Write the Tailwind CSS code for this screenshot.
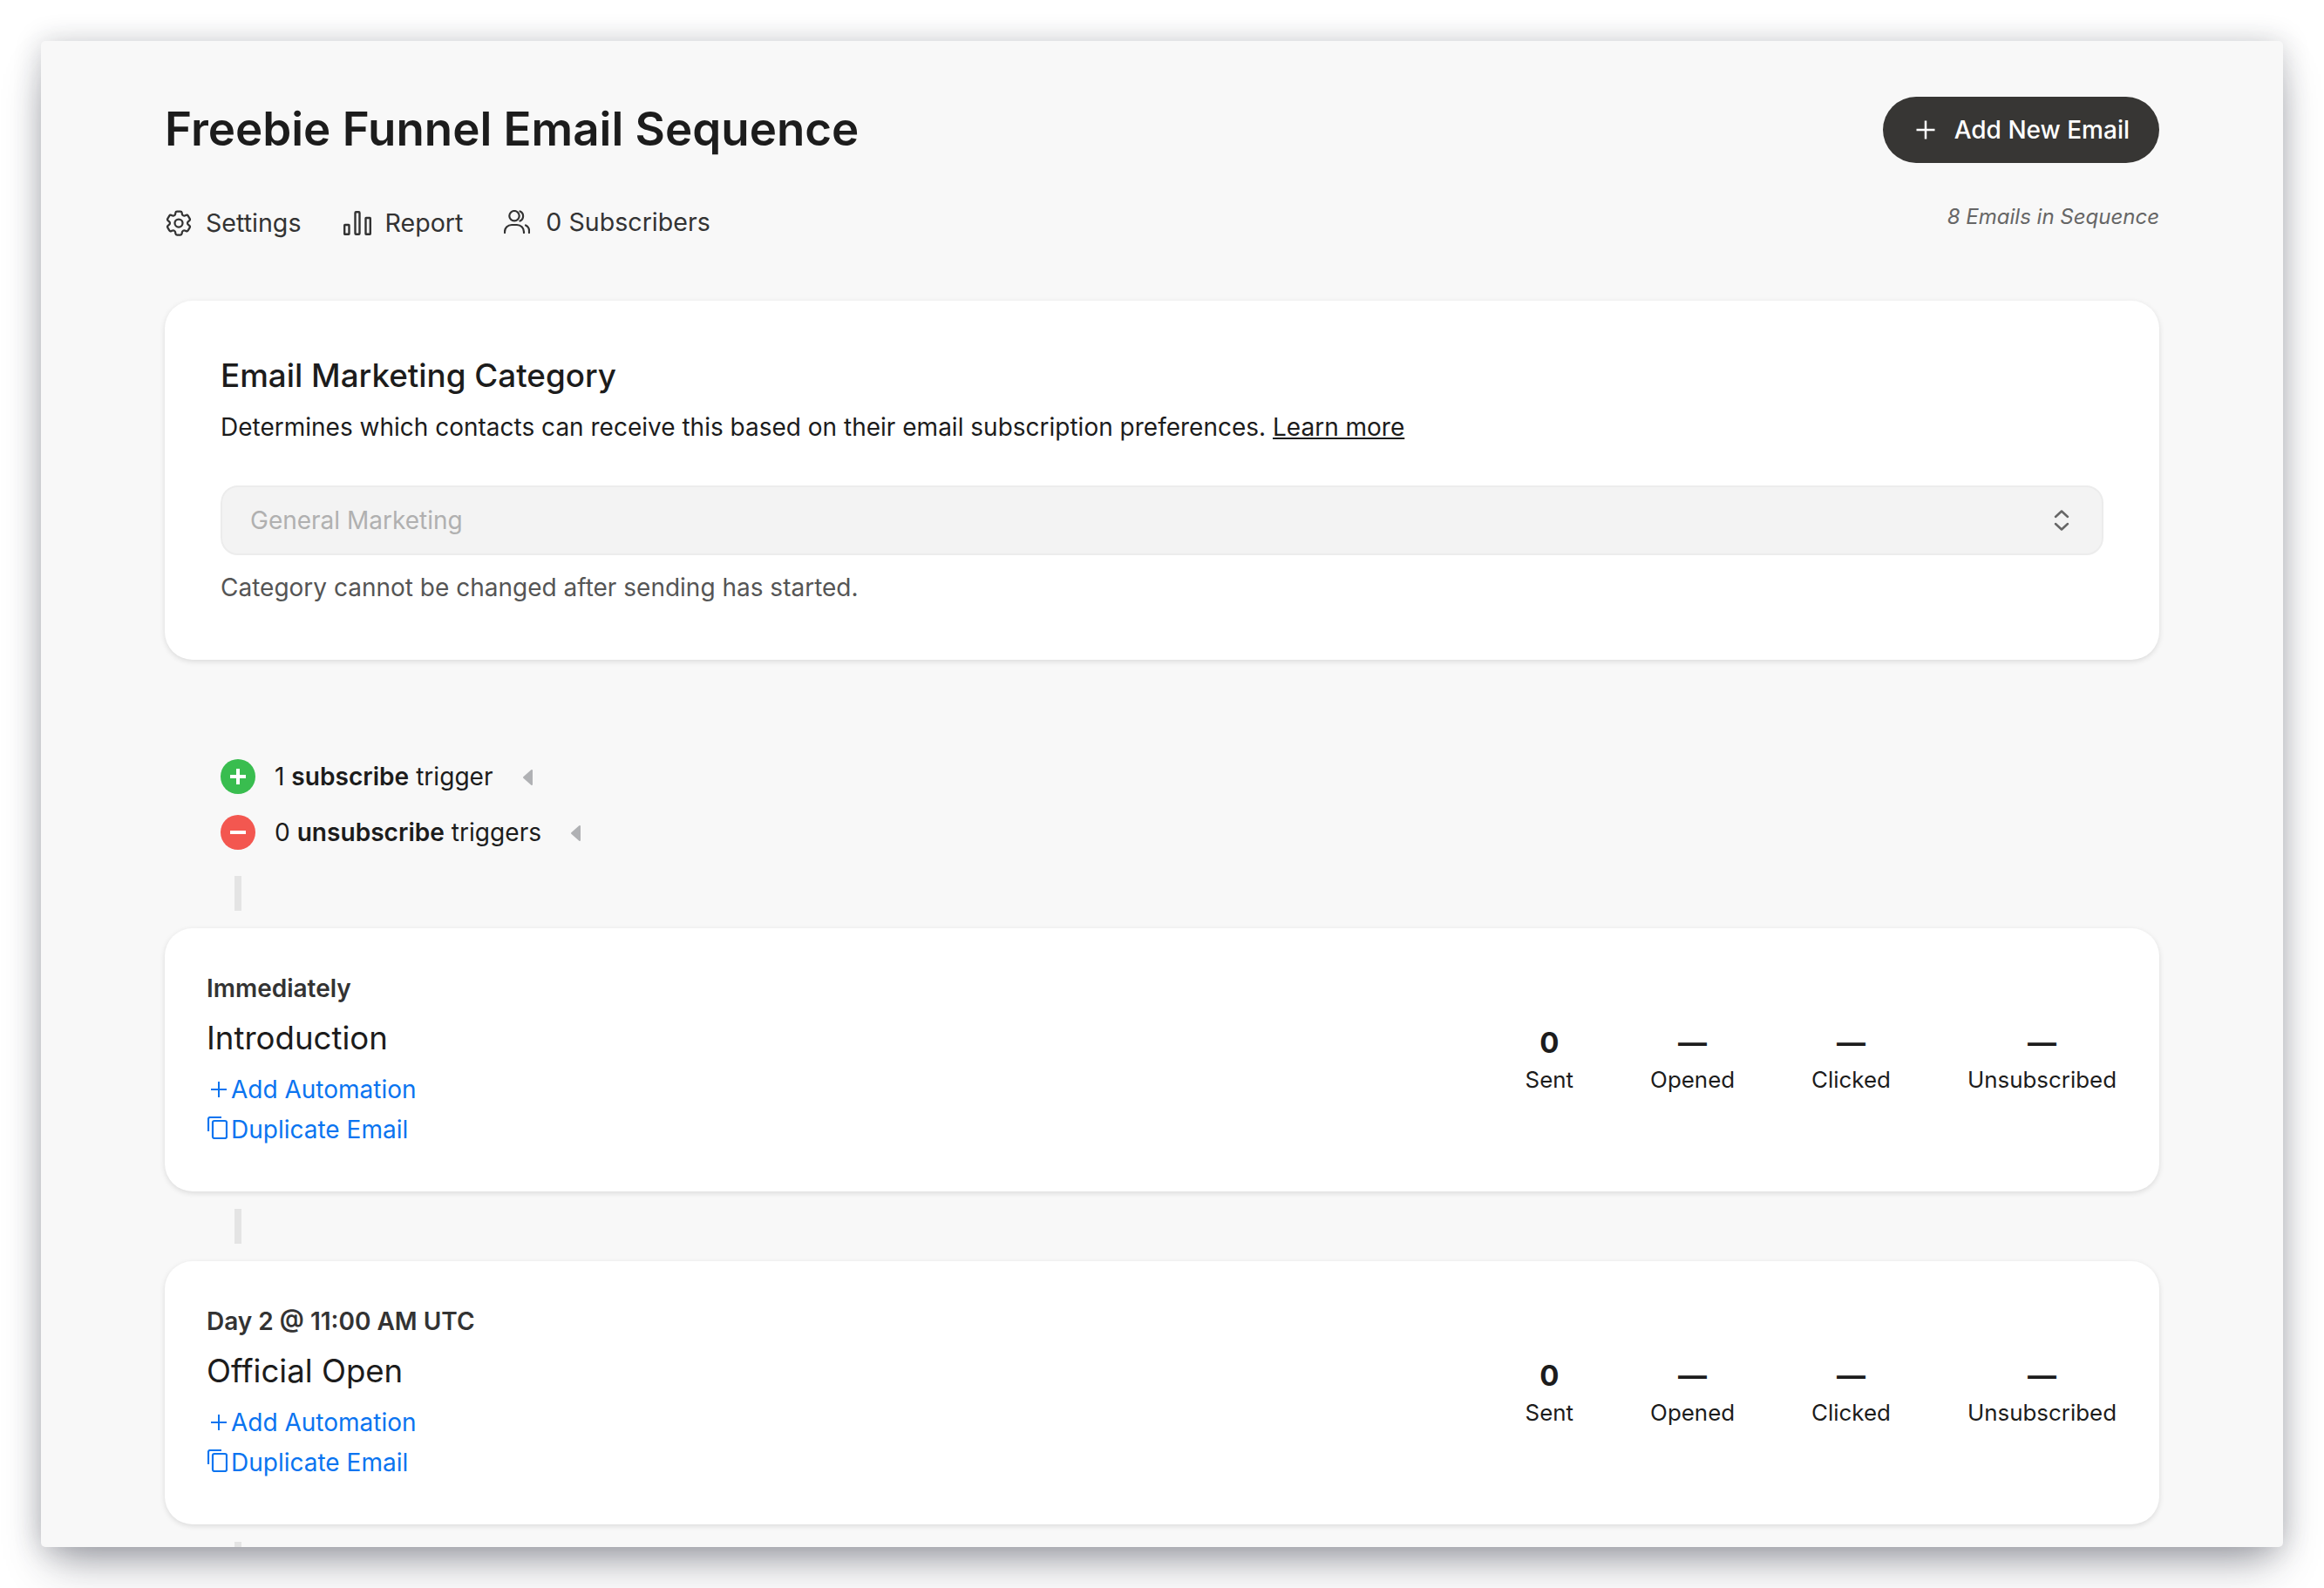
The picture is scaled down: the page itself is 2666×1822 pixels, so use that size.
<!DOCTYPE html>
<html>
  <head>
    <meta charset="UTF-8">
    <script src="https://cdn.jsdelivr.net/npm/@tailwindcss/browser@4"></script>
  </head>
  <body class="h-screen overflow-hidden bg-white pl-[47px] pt-[47px] font-['Inter',sans-serif] text-[28px] text-[#1c1c1c]">
    <main class="h-[1728px] w-[2572px] overflow-hidden rounded-[5px] bg-[#f8f8f8] px-[142px] pt-[64px] shadow-[0_26px_48px_-12px_rgba(30,34,50,0.42),0_0_32px_rgba(30,34,50,0.2)]">
      <header class="flex items-start justify-between">
        <div>
          <h1 class="flex h-[76px] items-center text-[52.900px] font-semibold">Freebie Funnel Email Sequence</h1>
          <nav class="mt-[48px] flex items-center text-[28.600px] text-[#333]">
            <a class="flex items-center gap-[13px]">
              <svg class="-ml-[2px] h-[36px] w-[36px]" viewBox="0 0 24 24" fill="none" stroke="currentColor" stroke-width="1.5" stroke-linecap="round" stroke-linejoin="round"><path d="M9.594 3.94c.09-.542.56-.94 1.11-.94h2.593c.55 0 1.02.398 1.11.94l.213 1.281c.063.374.313.686.645.87.074.04.147.083.22.127.325.196.72.257 1.075.124l1.217-.456a1.125 1.125 0 0 1 1.37.49l1.296 2.247a1.125 1.125 0 0 1-.26 1.431l-1.003.827c-.293.241-.438.613-.43.992a7.723 7.723 0 0 1 0 .255c-.008.378.137.75.43.991l1.004.827c.424.35.534.955.26 1.43l-1.298 2.247a1.125 1.125 0 0 1-1.369.491l-1.217-.456c-.355-.133-.75-.072-1.076.124a6.47 6.47 0 0 1-.22.128c-.331.183-.581.495-.644.869l-.213 1.281c-.09.543-.56.94-1.11.94h-2.594c-.55 0-1.019-.398-1.11-.94l-.213-1.281c-.062-.374-.312-.686-.644-.87a6.52 6.52 0 0 1-.22-.127c-.325-.196-.72-.257-1.076-.124l-1.217.456a1.125 1.125 0 0 1-1.369-.49l-1.297-2.247a1.125 1.125 0 0 1 .26-1.431l1.004-.827c.292-.24.437-.613.43-.991a6.932 6.932 0 0 1 0-.255c.007-.38-.138-.751-.43-.992l-1.004-.827a1.125 1.125 0 0 1-.26-1.43l1.297-2.247a1.125 1.125 0 0 1 1.37-.491l1.216.456c.356.133.751.072 1.076-.124.072-.044.146-.086.22-.128.332-.183.582-.495.644-.869l.214-1.28Z"/><circle cx="12" cy="12" r="3"/></svg>
              <span>Settings</span>
            </a>
            <a class="ml-[49px] flex items-center gap-[15px]">
              <svg class="h-[28px] w-[32px]" viewBox="0 0 32 28" fill="none" stroke="currentColor" stroke-width="2.400"><rect x="1.200" y="16" width="5.300" height="10.800" rx=".5"/><rect x="13.500" y="1.200" width="5" height="25.600" rx="1"/><rect x="25.500" y="8" width="5.300" height="18.800" rx=".5"/></svg>
              <span>Report</span>
            </a>
            <a class="ml-[47px] flex items-center gap-[18px]">
              <svg class="-mt-[4px] h-[27px] w-[30px]" viewBox="0 0 30 27" fill="none" stroke="currentColor" stroke-width="2.200" stroke-linecap="round"><circle cx="12" cy="6.700" r="5.700"/><path d="M18.500 1.500a6 6 0 0 1 0 11"/><path d="M1 26v-1a8 8 0 0 1 8-8h6a8 8 0 0 1 8 8v1"/><path d="M25 17.500a7 7 0 0 1 4 6.500v2"/></svg>
              <span class="-mt-[3px]">0 Subscribers</span>
            </a>
          </nav>
        </div>
        <div class="flex flex-col items-end">
          <button class="flex h-[76px] items-center gap-[21px] rounded-full bg-[#373634] pl-[37px] pr-[34px] font-medium text-white">
            <svg class="h-[24px] w-[24px]" viewBox="0 0 24 24" fill="none" stroke="currentColor" stroke-width="2.500"><path d="M12 1.500v21M1.500 12h21"/></svg>
            Add New Email
          </button>
          <p class="mt-[44px] text-[24px] italic text-[#666]">8 Emails in Sequence</p>
        </div>
      </header>

      <section class="mt-[67px] rounded-[32px] bg-white px-[64px] pb-[62px] pt-[59px] shadow-[0_2px_6px_rgba(0,0,0,0.12)]">
        <h2 class="text-[36.800px] font-medium leading-[54px]">Email Marketing Category</h2>
        <p class="mt-[9px] leading-[46px]">Determines which contacts can receive this based on their email subscription preferences. <a class="underline">Learn more</a></p>
        <div class="mt-[44px] flex h-[80px] items-center justify-between rounded-[20px] border-2 border-[#ececec] bg-[#f3f3f3] pl-[32px] pr-[36px] text-[#b0b0b0]">
          <span>General Marketing</span>
          <svg class="h-[26px] w-[20px] text-[#666]" viewBox="0 0 20 26" fill="none" stroke="currentColor" stroke-width="2.500" stroke-linecap="round" stroke-linejoin="round"><path d="M3 9l7-6.500 7 6.500M3 17l7 6.500 7-6.500"/></svg>
        </div>
        <p class="mt-[16px] leading-[42px] text-[#555]">Category cannot be changed after sending has started.</p>
      </section>

      <section class="ml-[64px] mt-[114px] flex flex-col gap-[24px] text-[28.100px]">
        <div class="flex h-[40px] items-center">
          <span class="flex h-[40px] w-[40px] items-center justify-center rounded-full bg-[#39bd4f]">
            <svg class="h-[24px] w-[24px]" viewBox="0 0 24 24" stroke="#fff" stroke-width="4"><path d="M12 3v18M3 12h18"/></svg>
          </span>
          <span class="ml-[22px]">1 <b class="font-semibold">subscribe</b> trigger</span>
          <svg class="ml-[33px] mt-[2px] h-[20px] w-[12px]" viewBox="0 0 12 20" fill="#b0b1b4" stroke="#b0b1b4" stroke-width="2" stroke-linejoin="round"><path d="M11 2v16L2 10z"/></svg>
        </div>
        <div class="flex h-[40px] items-center">
          <span class="flex h-[40px] w-[40px] items-center justify-center rounded-full bg-[#f35750]">
            <svg class="h-[24px] w-[24px]" viewBox="0 0 24 24" stroke="#fff" stroke-width="4"><path d="M3 12h18"/></svg>
          </span>
          <span class="ml-[22px]">0 <b class="font-semibold">unsubscribe</b> triggers</span>
          <svg class="ml-[33px] mt-[2px] h-[20px] w-[12px]" viewBox="0 0 12 20" fill="#b0b1b4" stroke="#b0b1b4" stroke-width="2" stroke-linejoin="round"><path d="M11 2v16L2 10z"/></svg>
        </div>
      </section>

      <div class="mb-[20px] ml-[80px] mt-[30px] h-[40px] w-[8px] bg-[#e4e4e4]"></div>

      <article class="flex h-[302px] items-center justify-between rounded-[32px] bg-white pl-[48px] pr-[49px] shadow-[0_2px_6px_rgba(0,0,0,0.12)]">
        <div>
          <p class="font-semibold leading-[42px] text-[#333]">Immediately</p>
          <h3 class="mt-[6px] text-[36.600px] leading-[60px]">Introduction</h3>
          <a class="mt-[6px] flex h-[46px] items-center gap-[5px] text-[#0a74f0]">
            <svg class="ml-[5px] h-[18px] w-[18px]" viewBox="0 0 18 18" fill="none" stroke="currentColor" stroke-width="2"><path d="M9 0v18M0 9h18"/></svg>
            Add Automation
          </a>
          <a class="flex h-[46px] items-center gap-[4px] text-[#0a74f0]">
            <svg class="-mt-[4px] ml-[1px] h-[26px] w-[23px]" viewBox="0 0 23 26" fill="none" stroke="currentColor" stroke-width="2.200" stroke-linejoin="round"><rect x="6" y="5" width="16" height="20" rx="2"/><path d="M1 17V3a2 2 0 0 1 2-2h13"/></svg>
            Duplicate Email
          </a>
        </div>
        <dl class="flex gap-[88px] pt-[3px] text-center text-[25.900px]">
          <div><dt class="text-[33px] font-bold leading-[42px]">0</dt><dd class="mt-[1px] leading-[42px]">Sent</dd></div>
          <div><dt class="text-[33px] font-bold leading-[42px]">—</dt><dd class="mt-[1px] leading-[42px]">Opened</dd></div>
          <div><dt class="text-[33px] font-bold leading-[42px]">—</dt><dd class="mt-[1px] leading-[42px]">Clicked</dd></div>
          <div><dt class="text-[33px] font-bold leading-[42px]">—</dt><dd class="mt-[1px] leading-[42px]">Unsubscribed</dd></div>
        </dl>
      </article>

      <div class="my-[20px] ml-[80px] h-[40px] w-[8px] bg-[#e4e4e4]"></div>

      <article class="flex h-[302px] items-center justify-between rounded-[32px] bg-white pl-[48px] pr-[49px] shadow-[0_2px_6px_rgba(0,0,0,0.12)]">
        <div>
          <p class="font-semibold leading-[42px] text-[#333]">Day 2 @ 11:00 AM UTC</p>
          <h3 class="mt-[6px] text-[36.600px] leading-[60px]">Official Open</h3>
          <a class="mt-[6px] flex h-[46px] items-center gap-[5px] text-[#0a74f0]">
            <svg class="ml-[5px] h-[18px] w-[18px]" viewBox="0 0 18 18" fill="none" stroke="currentColor" stroke-width="2"><path d="M9 0v18M0 9h18"/></svg>
            Add Automation
          </a>
          <a class="flex h-[46px] items-center gap-[4px] text-[#0a74f0]">
            <svg class="-mt-[4px] ml-[1px] h-[26px] w-[23px]" viewBox="0 0 23 26" fill="none" stroke="currentColor" stroke-width="2.200" stroke-linejoin="round"><rect x="6" y="5" width="16" height="20" rx="2"/><path d="M1 17V3a2 2 0 0 1 2-2h13"/></svg>
            Duplicate Email
          </a>
        </div>
        <dl class="flex gap-[88px] pt-[3px] text-center text-[25.900px]">
          <div><dt class="text-[33px] font-bold leading-[42px]">0</dt><dd class="mt-[1px] leading-[42px]">Sent</dd></div>
          <div><dt class="text-[33px] font-bold leading-[42px]">—</dt><dd class="mt-[1px] leading-[42px]">Opened</dd></div>
          <div><dt class="text-[33px] font-bold leading-[42px]">—</dt><dd class="mt-[1px] leading-[42px]">Clicked</dd></div>
          <div><dt class="text-[33px] font-bold leading-[42px]">—</dt><dd class="mt-[1px] leading-[42px]">Unsubscribed</dd></div>
        </dl>
      </article>

      <div class="my-[20px] ml-[80px] h-[40px] w-[8px] bg-[#e4e4e4]"></div>
    </main>
  </body>
</html>
